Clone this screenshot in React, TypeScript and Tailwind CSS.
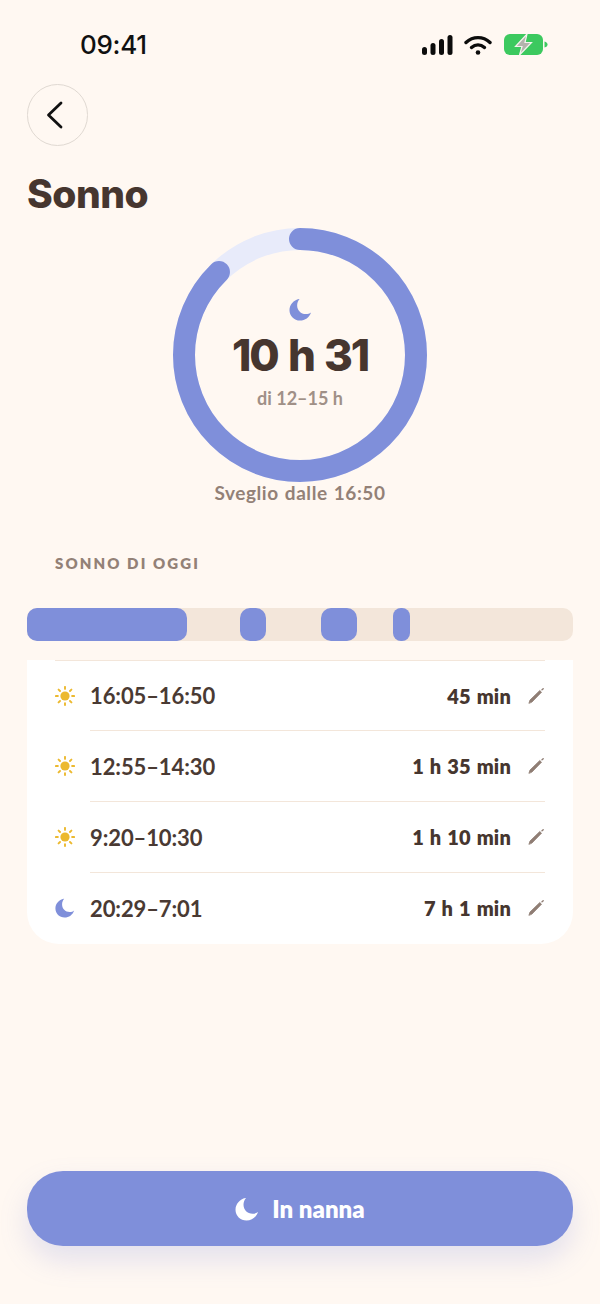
const rows = [
  { icon: 'sun', time: '16:05–16:50', dur: '45 min' },
  { icon: 'sun', time: '12:55–14:30', dur: '1 h 35 min' },
  { icon: 'sun', time: '9:20–10:30', dur: '1 h 10 min' },
  { icon: 'moon', time: '20:29–7:01', dur: '7 h 1 min' },
];

function Moon({ className }: { className: string }) {
  return (
    <svg viewBox="0 0 24 24" className={className} fill="currentColor">
      <path d="M10.500 1C4.800 2.200 .5 7 .5 12.700.5 18.700 5.400 23.500 11.500 23.500c5.200 0 9.800-3.400 11.500-8.500-1.500 1.200-3.400 1.800-5.400 1.800-5.200 0-9.100-4-9.100-9 0-2.500.8-4.900 2.500-6.800Z" />
    </svg>
  );
}

function Sun() {
  return (
    <svg viewBox="0 0 20 20" className="w-5 h-5 text-[#ecb92f]" fill="none" stroke="currentColor" strokeWidth="1.900" strokeLinecap="round">
      <circle cx="10" cy="10" r="4.600" fill="currentColor" stroke="none" />
      <path d="M10 .9v2M10 17.100v2M.9 10h2M17.100 10h2M3.600 3.600 5 5M15 15l1.400 1.400M3.600 16.400 5 15M15 5l1.400-1.400" />
    </svg>
  );
}

function Pencil() {
  return (
    <svg viewBox="0 0 18 18" className="w-[18px] h-[18px] text-[#8f7d74]" fill="none" stroke="currentColor" strokeLinecap="round">
      <path d="M2 16 3 13 12.800 3.500 14.500 5.200 5 15Z" fill="currentColor" strokeWidth="0.8" />
      <path d="M15 2.800 16.200 1.700" strokeWidth="1.400" />
    </svg>
  );
}

function StatusBar() {
  return (
    <div className="h-[84px] pt-[6px] flex items-center justify-between pl-[80px] pr-[52px]">
      <span className="text-[26px] leading-none font-medium tracking-[-0.3px] text-[#111] font-['Inter',sans-serif]">09:41</span>
      <div className="flex items-center">
        <svg viewBox="0 0 31 20" className="w-[31px] h-5" fill="#0c0c0c">
          <rect x="0" y="12" width="5" height="8" rx="2.500" />
          <rect x="8.500" y="8" width="5" height="12" rx="2.500" />
          <rect x="17" y="4" width="5" height="16" rx="2.500" />
          <rect x="25.500" y="0" width="5" height="20" rx="2.500" />
        </svg>
        <svg viewBox="0 0 28 20" className="ml-[11px] w-[28px] h-5" fill="none" stroke="#0c0c0c" strokeWidth="3.400" strokeLinecap="round">
          <path d="M2 7.500C9 1 19 1 26 7.500" />
          <path d="M7.500 12.500C11.500 9 16.500 9 20.500 12.500" />
          <circle cx="14" cy="17.500" r="2.300" fill="#0c0c0c" stroke="none" />
        </svg>
        <svg viewBox="0 0 44 22" className="ml-[12px] w-[44px] h-[22px]">
          <rect x="0" y="0" width="39" height="21" rx="6" fill="#3cc95f" />
          <path d="M40.500 7.500c2 .5 3 1.500 3 3s-1 2.500-3 3Z" fill="#3cc95f" />
          <path d="M23 0 11.500 12.500H18L15.500 21 27.500 8.500H21Z" fill="#b3b3ad" stroke="#f4f4ee" strokeWidth="1.200" />
        </svg>
      </div>
    </div>
  );
}

function Ring() {
  const r = 116;
  const c = 2 * Math.PI * r;
  return (
    <div className="relative w-[254px] h-[254px]">
      <svg viewBox="0 0 254 254" className="w-[254px] h-[254px] -rotate-90" fill="none" strokeWidth="22">
        <circle cx="127" cy="127" r={r} stroke="#e8ebfa" />
        <circle cx="127" cy="127" r={r} stroke="#7f8fda" strokeLinecap="round" strokeDasharray={`${c * 0.876} ${c}`} />
      </svg>
      <div className="absolute inset-0 flex flex-col items-center pt-[70px]">
        <Moon className="w-[23px] h-[23px] text-[#7f8fda]" />
        <div className="mt-[5px] text-[44px] leading-[58px] font-extrabold tracking-[-2.2px] [word-spacing:3px] text-[#46362f] font-['Inter',sans-serif]">10 h 31</div>
        <div className="mt-[3px] text-[18px] leading-[22px] font-bold text-[#a09087]">di 12–15 h</div>
      </div>
    </div>
  );
}

export default function App() {
  return (
    <div className="w-[600px] h-[1304px] bg-[#fff8f2] flex flex-col font-['Lato',sans-serif] overflow-hidden">
      <StatusBar />
      <div className="px-[27px]">
        <button className="w-[61px] h-[62px] rounded-full border border-[#e0d9d2] flex items-center justify-center text-[#111]">
          <svg viewBox="0 0 24 30" className="w-6 h-[30px] -ml-[6px]" fill="none" stroke="currentColor" strokeWidth="2.800" strokeLinecap="round" strokeLinejoin="round">
            <path d="M18 3 5.500 15 18 27" />
          </svg>
        </button>
        <h1 className="mt-[25px] text-[39px] leading-[46px] font-extrabold tracking-[-0.5px] text-[#46362f] font-['Inter',sans-serif]">Sonno</h1>
      </div>
      <div className="mt-[11px] flex flex-col items-center">
        <Ring />
        <div className="-mt-[1px] text-[19px] leading-[24px] font-bold tracking-[0.55px] [word-spacing:1px] text-[#938177]">Sveglio dalle 16:50</div>
      </div>
      <div className="mt-[48px] pl-[55px] text-[15px] leading-[20px] font-extrabold tracking-[2.1px] text-[#938177]">SONNO DI OGGI</div>
      <div className="mt-[35px] mx-[27px] h-[33px] rounded-[10px] bg-[#f3e6da] flex">
        <div className="w-[160px] rounded-[10px] bg-[#7f8fda]" />
        <div className="ml-[53px] w-[26px] rounded-[10px] bg-[#7f8fda]" />
        <div className="ml-[55px] w-[36px] rounded-[10px] bg-[#7f8fda]" />
        <div className="ml-[36px] w-[17px] rounded-[8px] bg-[#7f8fda]" />
      </div>
      <div className="mt-[19px] mx-[27px] bg-white rounded-b-[32px] pl-[28px] pr-[28px] h-[284px]">
        {rows.map((row, i) => (
          <div key={row.time} className={`flex items-center border-t border-[#f3e6da] ${i === 0 ? 'h-[70px]' : 'h-[71px] ml-[35px]'}`}>
            <div className={`flex items-center flex-1 ${i === 0 ? '' : '-ml-[35px]'}`}>
              <div className="w-[35px]">
                {row.icon === 'sun' ? <Sun /> : <Moon className="w-5 h-5 text-[#7f8fda]" />}
              </div>
              <span className="text-[22px] font-bold tracking-[-0.1px] text-[#4a3a33]">{row.time}</span>
            </div>
            <span className="text-[20px] font-extrabold tracking-[0.2px] [word-spacing:1px] text-[#46362f]">{row.dur}</span>
            <div className="ml-[16px]"><Pencil /></div>
          </div>
        ))}
      </div>
      <div className="mt-auto mb-[58px] mx-[27px]">
        <button className="w-full h-[75px] rounded-[36px] bg-[#7f8fda] shadow-[0_14px_28px_rgba(127,143,218,0.22)] flex items-center justify-center gap-[13px] text-white">
          <Moon className="w-[24px] h-[24px]" />
          <span className="text-[24px] font-extrabold">In nanna</span>
        </button>
      </div>
    </div>
  );
}
